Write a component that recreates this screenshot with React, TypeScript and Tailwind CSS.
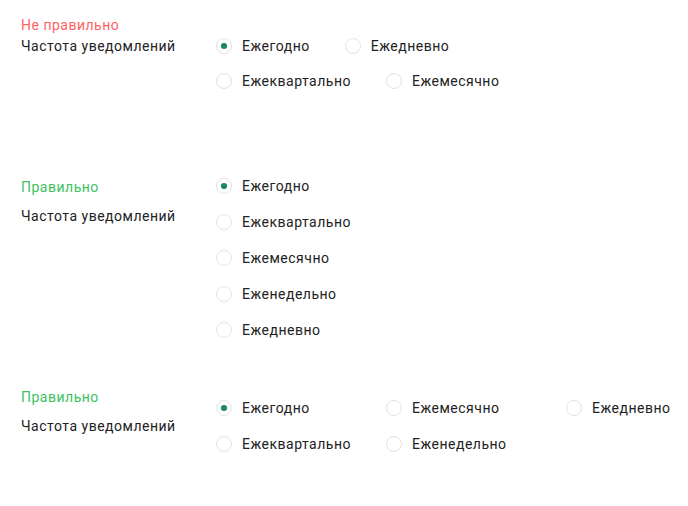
import React from "react"

type Opt = { label: string; checked?: boolean }

function Radio({ label, checked }: Opt) {
  return (
    <label className="flex items-center gap-[10px] h-5 whitespace-nowrap">
      <span className="w-4 h-4 rounded-full border border-[#e2e2e2] bg-white flex items-center justify-center shrink-0">
        {checked && <span className="w-[6px] h-[6px] rounded-full bg-[#14875d]" />}
      </span>
      <span className="text-sm leading-5 tracking-[0.5px] text-[#222]">{label}</span>
    </label>
  )
}

export default function App() {
  return (
    <div className="w-[688px] h-[506px] bg-white pl-[21px] pt-[15px] overflow-hidden" style={{ fontFamily: "Roboto, 'Liberation Sans', sans-serif" }}>
      {/* wrong */}
      <div className="flex items-start">
        <div className="w-[195px] shrink-0 text-sm leading-5 tracking-[0.5px]">
          <div className="text-[#ff6262]">Не правильно</div>
          <div className="mt-px text-[#222]">Частота уведомлений</div>
        </div>
        <div className="mt-[21px] w-[300px] flex flex-wrap gap-x-[35px] gap-y-[15px]">
          <Radio label="Ежегодно" checked />
          <Radio label="Ежедневно" />
          <Radio label="Ежеквартально" />
          <Radio label="Ежемесячно" />
        </div>
      </div>

      {/* right, vertical */}
      <div className="mt-[85px] flex items-start">
        <div className="w-[195px] shrink-0 pt-px text-sm leading-5 tracking-[0.5px]">
          <div className="text-[#3cc161]">Правильно</div>
          <div className="mt-[9px] text-[#222]">Частота уведомлений</div>
        </div>
        <div className="flex flex-col gap-4">
          <Radio label="Ежегодно" checked />
          <Radio label="Ежеквартально" />
          <Radio label="Ежемесячно" />
          <Radio label="Еженедельно" />
          <Radio label="Ежедневно" />
        </div>
      </div>

      {/* right, columns */}
      <div className="mt-[47px] flex items-start">
        <div className="w-[195px] shrink-0 text-sm leading-5 tracking-[0.5px]">
          <div className="text-[#3cc161]">Правильно</div>
          <div className="mt-[9px] text-[#222]">Частота уведомлений</div>
        </div>
        <div className="mt-[11px] grid grid-rows-2 grid-flow-col grid-cols-[170px_180px_auto] gap-y-4">
          <Radio label="Ежегодно" checked />
          <Radio label="Ежеквартально" />
          <Radio label="Ежемесячно" />
          <Radio label="Еженедельно" />
          <Radio label="Ежедневно" />
        </div>
      </div>
    </div>
  )
}
